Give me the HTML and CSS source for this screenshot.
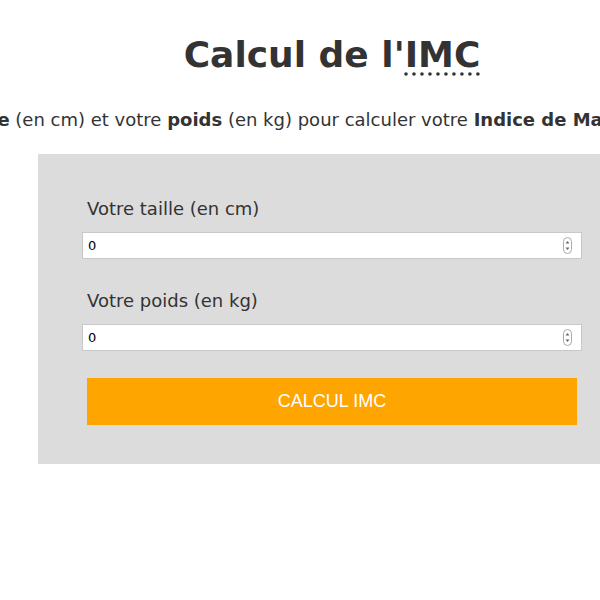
FILE: index.html
```html
<!DOCTYPE html>
<html lang="fr">
<head>
    <meta charset="UTF-8">
    <meta name="viewport" content="width=device-width, initial-scale=1.0">
    <title>Calcul de l'IMC</title>
    <link rel="stylesheet" href="styles.css">
</head>
<body>
    <div class="page">
        <h1>Calcul de l'<abbr title="Indice de Masse Corporelle">IMC</abbr></h1>
        <div class="intro">
            <p>Entrez votre <b>taille</b> (en cm) et votre <b>poids</b> (en kg) pour calculer votre <b>Indice de Masse Corporelle (IMC)</b> !</p>
        </div>

        <!-- Formulaire -->
        <form class="imc-form" onsubmit="return false">
            <label for="taille">Votre taille (en cm)</label>
            <div class="field">
                <input type="number" id="taille" value="0">
                <svg class="spin" width="9" height="17" viewBox="0 0 9 17"><rect x="0.5" y="0.5" width="8" height="16" rx="4" fill="#fff" stroke="#aaa"/><path d="M2.6 6.5 4.5 4 6.4 6.5Z M2.6 10.5 4.5 13 6.4 10.5Z" fill="#666"/></svg>
            </div>
            <label for="poids">Votre poids (en kg)</label>
            <div class="field">
                <input type="number" id="poids" value="0">
                <svg class="spin" width="9" height="17" viewBox="0 0 9 17"><rect x="0.5" y="0.5" width="8" height="16" rx="4" fill="#fff" stroke="#aaa"/><path d="M2.6 6.5 4.5 4 6.4 6.5Z M2.6 10.5 4.5 13 6.4 10.5Z" fill="#666"/></svg>
            </div>
            <button type="submit">CALCUL IMC</button>
        </form>
    </div>
</body>
</html>
```

FILE: styles.css
```css
html, body {
    margin: 0;
    overflow: hidden;
    background: #fff;
}
body {
    font-family: "DejaVu Sans", Verdana, sans-serif;
    color: #333;
}
.page {
    width: 664px;
    padding-top: 34px;
}
h1 {
    text-align: center;
    font-size: 36px;
    margin: 0 0 34px;
    color: #333;
}
abbr {
    text-decoration: underline dotted;
    text-underline-offset: 6px;
}
.intro {
    display: flex;
    justify-content: center;
    margin-bottom: 24px;
}
.intro p {
    white-space: nowrap;
    font-size: 18px;
    margin: 0;
}
.imc-form {
    display: flex;
    flex-direction: column;
    background: #dcdcdc;
    margin: 0 38px;
    padding: 44px 44px 39px;
}
label {
    font-size: 18px;
    padding-left: 5px;
    margin-bottom: 13px;
}
.field {
    position: relative;
    margin-bottom: 31px;
}
input {
    display: block;
    width: 100%;
    height: 27px;
    box-sizing: border-box;
    border: 1px solid #c8c8c8;
    padding: 0 5px;
    font-family: "DejaVu Sans", sans-serif;
    font-size: 13px;
    color: #000;
    -moz-appearance: textfield;
}
input::-webkit-inner-spin-button,
input::-webkit-outer-spin-button {
    -webkit-appearance: none;
    margin: 0;
}
.spin {
    position: absolute;
    right: 10px;
    top: 5px;
}
button {
    margin: -4px 5px 0;
    height: 47px;
    background: #ffa500;
    border: none;
    color: white;
    font-family: "Liberation Sans", Arial, sans-serif;
    font-size: 18px;
    cursor: pointer;
}
```
